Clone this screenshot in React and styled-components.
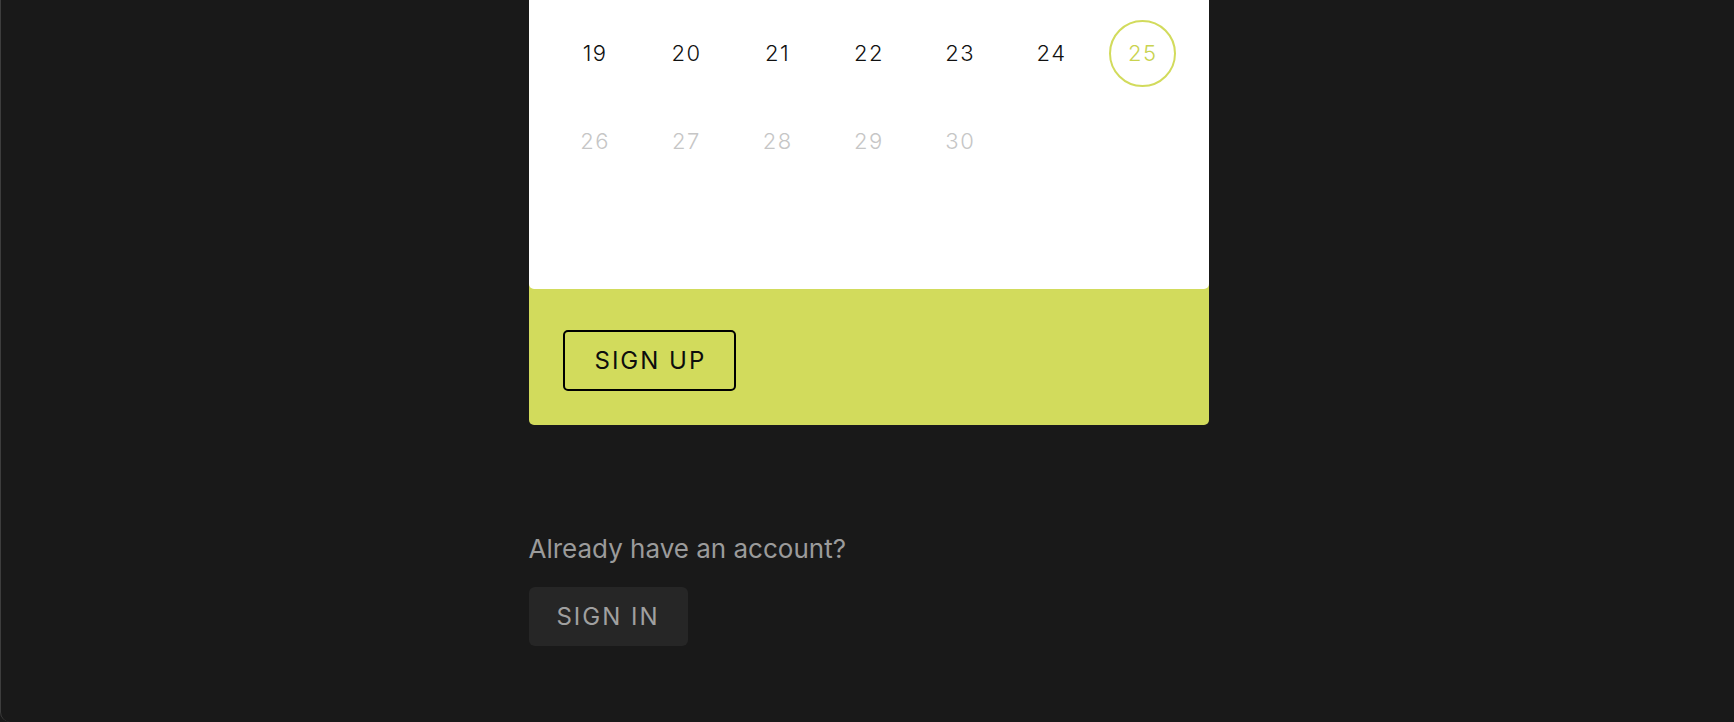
import React from "react";
import styled, { createGlobalStyle } from "styled-components";

const GlobalStyle = createGlobalStyle`
	html, body {
		margin: 0;
		padding: 0;
		background: #191919;
		font-family: Inter, "Noto Sans", sans-serif;
	}
`;

const Frame = styled.div`
	box-sizing: border-box;
	height: 722px;
	overflow: hidden;
	background: #191919;
	border-left: 1px solid #3d3d3d;
	border-radius: 0 0 10px 10px;
	display: flex;
	justify-content: center;
	padding-left: 2px;
`;

const Column = styled.div`
	width: 680px;
	display: flex;
	flex-direction: column;
	align-items: flex-start;
`;

const Card = styled.div`
	width: 100%;
	background: #d2db5c;
	border-radius: 0 0 5px 5px;
`;

const Calendar = styled.div`
	background: #ffffff;
	border-radius: 0 0 5px 5px;
	padding: 9px 20px 16px 21px;
	display: grid;
	grid-template-columns: repeat(7, 1fr);
	grid-template-rows: repeat(3, 88px);
`;

const Day = styled.div`
	display: flex;
	align-items: center;
	justify-content: center;
	font-size: 22px;
	font-weight: 300;
	letter-spacing: 1.5px;
	color: ${(p) => (p.$muted ? "#c6c6c6" : p.$today ? "#c9d34f" : "#111111")};

	span {
		box-sizing: border-box;
		width: 67px;
		height: 67px;
		display: flex;
		align-items: center;
		justify-content: center;
		border-radius: 50%;
		border: 2px solid ${(p) => (p.$today ? "#d2db5c" : "transparent")};
	}
`;

const Footer = styled.div`
	padding: 41px 34px 34px;
`;

const OutlineButton = styled.button`
	box-sizing: border-box;
	height: 61px;
	padding: 0 28px 0 30px;
	background: transparent;
	border: 2px solid #000;
	border-radius: 5px;
	font-family: inherit;
	font-size: 24px;
	letter-spacing: 2px;
	color: #0d0d0d;
`;

const Prompt = styled.p`
	margin: 108px 0 22px;
	font-size: 26px;
	line-height: 32px;
	color: #9b9b9b;
`;

const GhostButton = styled.button`
	box-sizing: border-box;
	height: 59px;
	width: 159px;
	border: none;
	border-radius: 6px;
	background: #262626;
	font-family: inherit;
	font-size: 24px;
	letter-spacing: 2px;
	color: #a0a0a0;
`;

const weeks = [
	[19, 20, 21, 22, 23, 24, 25],
	[26, 27, 28, 29, 30],
];

export default function App() {
	return (
		<>
			<GlobalStyle />
			<Frame>
				<Column>
					<Card>
						<Calendar>
							{weeks.flat().map((d) => (
								<Day key={d} $muted={d > 25} $today={d === 25}>
									<span>{d}</span>
								</Day>
							))}
						</Calendar>
						<Footer>
							<OutlineButton>SIGN UP</OutlineButton>
						</Footer>
					</Card>
					<Prompt>Already have an account?</Prompt>
					<GhostButton>SIGN IN</GhostButton>
				</Column>
			</Frame>
		</>
	);
}
